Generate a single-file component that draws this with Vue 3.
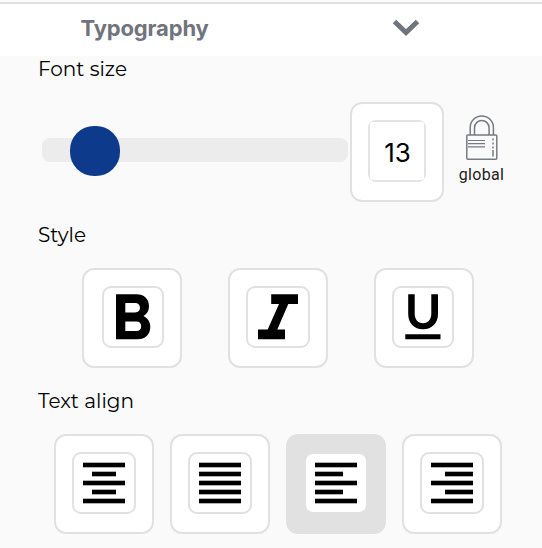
<script setup>
import { ref } from 'vue'

const size = ref(13)
const align = ref('left')
const styles = [
  { id: 'bold', width: 62 },
  { id: 'italic', width: 64 },
  { id: 'underline', width: 62 },
]
// Each entry holds the start and width of the short lines
const aligns = [
  { id: 'center', x: 9, w: 24 },
  { id: 'justify', x: 0, w: 42 },
  { id: 'left', x: 0, w: 28 },
  { id: 'right', x: 14, w: 28 },
]
</script>

<template>
  <main class="panel">
    <header class="header">
      <span class="title">Typography</span>
      <svg class="chevron" width="28" height="18" viewBox="0 0 28 18">
        <path d="M2.500 2.500 14 13.500 25.500 2.500" fill="none" stroke="#70747c" stroke-width="5" />
      </svg>
    </header>

    <section class="section">
      <h2 class="label">Font size</h2>
      <div class="size-row">
        <div class="track"><div class="thumb"></div></div>
        <div class="number-box">
          <div class="number">
            <span class="value">{{ size }}</span>
          </div>
        </div>
        <div class="global">
          <svg width="32" height="46" viewBox="0 0 32 46" fill="none" stroke="#777a82">
            <path d="M4.200 20V12.500a11.600 11.600 0 0 1 23.200 0V20M8.500 20V12.800a7.300 7.300 0 0 1 14.600 0V20" stroke-width="1.500" />
            <rect x=".8" y="20" width="30" height="24.200" rx="1" stroke-width="1.500" />
            <path d="M2 25.500H19M2 28.700H19M2 31.900H19" stroke-width="1.200" />
            <path d="M27 23.500v2M27 27.500v2M27 31.500v2M27 35v6.500" stroke-width="1.500" />
          </svg>
          <span class="global-text">global</span>
        </div>
      </div>
    </section>

    <section class="section">
      <h2 class="label">Style</h2>
      <div class="style-row">
        <button v-for="s in styles" :key="s.id" class="tile" :class="s.id">
          <span class="inner" :style="{ width: s.width + 'px' }">
            <svg v-if="s.id === 'bold'" class="glyph" width="36" height="46" viewBox="0 0 36 46">
              <path fill-rule="evenodd" d="M0 .3H20.500C28 .3 33 5 33 12.300C33 16.800 31 20 27.500 22C32 24.100 34.300 28.300 34.300 33C34.300 40.500 29 45.300 21.500 45.300H0ZM9.300 9V18.400H19.200C22 18.400 24 16.500 24 13.700S22 9 19.200 9ZM9.300 27.400V37H20.500C23.300 37 25.200 35 25.200 32.200S23.300 27.400 20.500 27.400Z" />
            </svg>
            <svg v-else-if="s.id === 'italic'" class="glyph" width="40" height="46" viewBox="0 0 40 46">
              <path d="M13.200 .3H40V10H30.300L19.300 35.500H27V45.300H0V35.500H9.700L21 10H13.200Z" />
            </svg>
            <svg v-else class="glyph" width="36" height="46" viewBox="0 0 36 46">
              <path d="M3.200 .3H9.700V19.500C9.700 25.500 13 29.300 18 29.300S26.300 25.500 26.300 19.500V.3H33V20C33 29 27 35.300 18 35.300S3.200 29 3.200 20ZM.3 40.200H35.500V45.300H.3Z" />
            </svg>
          </span>
        </button>
      </div>
    </section>

    <section class="section">
      <h2 class="label">Text align</h2>
      <div class="align-row">
        <button v-for="a in aligns" :key="a.id" class="tile" :class="{ active: align === a.id }" @click="align = a.id">
          <span class="inner wide">
            <svg class="lines" width="42" height="42" viewBox="0 0 42 42">
              <rect v-for="n in 5" :key="n" :x="n % 2 ? 0 : a.x" :y="(n - 1) * 9 + 0.7" :width="n % 2 ? 42 : a.w" height="4.600" />
            </svg>
          </span>
        </button>
      </div>
    </section>
  </main>
</template>

<style>
body {
  background: #fafafa;
}
</style>

<style scoped>
.panel {
  box-sizing: border-box;
  width: 542px;
  height: 548px;
  padding-top: 2px;
  overflow: hidden;
  background: #fafafa;
  color: #000;
  font-family: Inter, sans-serif;
}
.header {
  box-sizing: border-box;
  display: flex;
  height: 54px;
  padding-left: 80.500px;
  border-top: 2px solid #e0e0e0;
  background: #fff;
}
.title {
  width: 311.500px;
  font: 700 22px/48px Inter, sans-serif;
  letter-spacing: -0.150px;
  color: #70747c;
}
.chevron {
  margin-top: 15px;
}
.section {
  height: 166px;
}
.label {
  margin: 0;
  height: 46px;
  padding-left: 38px;
  font: 400 20px/26px Montserrat, Inter, sans-serif;
}
.size-row {
  display: flex;
  padding-left: 42px;
}
.track {
  box-sizing: border-box;
  width: 306px;
  height: 24px;
  margin: 36px 2px 0 0;
  padding-left: 28px;
  border-radius: 8px;
  background: #ececec;
}
.thumb {
  width: 50px;
  height: 50px;
  margin-top: -12px;
  border-radius: 24px;
  background: #0e3a8c;
}
.number-box,
.tile {
  box-sizing: border-box;
  display: flex;
  flex: none;
  width: 100px;
  height: 100px;
  padding: 16px;
  border: 2px solid #e1e1e1;
  border-radius: 12px;
  background: #fff;
}
.number-box {
  width: 94px;
}
.number {
  box-sizing: border-box;
  width: 58px;
  height: 62px;
  padding: 2px;
  border-radius: 8px;
  background: #e3e3e3;
  overflow: hidden;
}
.value {
  display: block;
  height: 58px;
  border-radius: 2px;
  background: #fff;
  font: 400 26px/62px Inter, sans-serif;
  text-align: center;
  text-indent: 1px;
}
.global {
  display: flex;
  flex-direction: column;
  align-items: center;
  width: 75px;
  padding-top: 13px;
}
.global-text {
  margin-top: 2px;
  font: 400 16px/24px Roboto, sans-serif;
  letter-spacing: 0.3px;
  color: #222;
}
.style-row {
  display: flex;
  gap: 46px;
  padding-left: 82px;
}
.align-row {
  display: flex;
  gap: 16px;
  padding-left: 54px;
}
.inner {
  box-sizing: border-box;
  display: flex;
  justify-content: center;
  height: 62px;
  border: 2px solid #e1e1e1;
  border-radius: 9px;
  background: #fff;
}
.bold {
  padding-left: 18px;
}
.bold .glyph {
  margin-left: 2px;
}
.glyph {
  flex: none;
  margin-top: 6px;
}
.wide {
  width: 64px;
}
.lines {
  margin: 8px 0 0;
}
.active {
  background: #e1e1e1;
}
</style>
